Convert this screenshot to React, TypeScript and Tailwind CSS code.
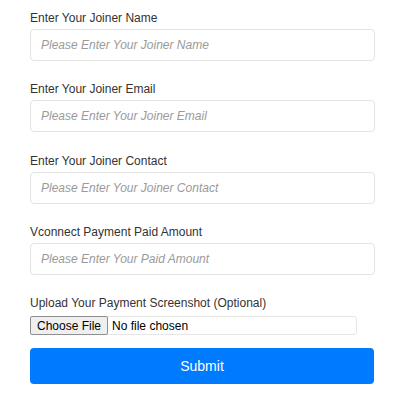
import React from "react";

const fields = [
  { label: "Enter Your Joiner Name", ph: "Please Enter Your Joiner Name" },
  { label: "Enter Your Joiner Email", ph: "Please Enter Your Joiner Email" },
  { label: "Enter Your Joiner Contact", ph: "Please Enter Your Joiner Contact" },
  { label: "Vconnect Payment Paid Amount", ph: "Please Enter Your Paid Amount" },
];

export default function App() {
  return (
    <div
      className="w-[400px] h-[400px] bg-white pl-[30px] pt-[9px]"
      style={{ fontFamily: '"Liberation Sans", Arial, sans-serif' }}
    >
      <div className="w-[345px] flex flex-col">
        {fields.map((f) => (
          <div key={f.label} className="flex flex-col mb-[19.33px]">
            <label className="block text-[12px] leading-[18px] text-[#333] mb-[2px]">{f.label}</label>
            <input
              className="h-[32px] w-full border border-[#e3e3e3] rounded-[4px] px-[10px] text-[12px] italic text-[#333] placeholder:text-[#9a9a9a] outline-none"
              placeholder={f.ph}
            />
          </div>
        ))}
        <label className="block text-[12px] leading-[18px] text-[#333] mb-[4px]">
          Upload Your Payment Screenshot (Optional)
        </label>
        <div className="w-[327px] h-[19px] border border-[#e6e6e6] rounded-[3px] flex items-center text-[12px] text-black">
          <div className="h-[19px] -my-px -ml-px px-[6px] flex items-center bg-[#efefef] border border-[#8f8f8f] rounded-[2px]">
            Choose File
          </div>
          <span className="ml-[4px]">No file chosen</span>
        </div>
        <button className="mt-[13px] w-[344px] h-[36px] bg-[#007bff] rounded-[4px] text-white text-[14px]">
          Submit
        </button>
      </div>
    </div>
  );
}
